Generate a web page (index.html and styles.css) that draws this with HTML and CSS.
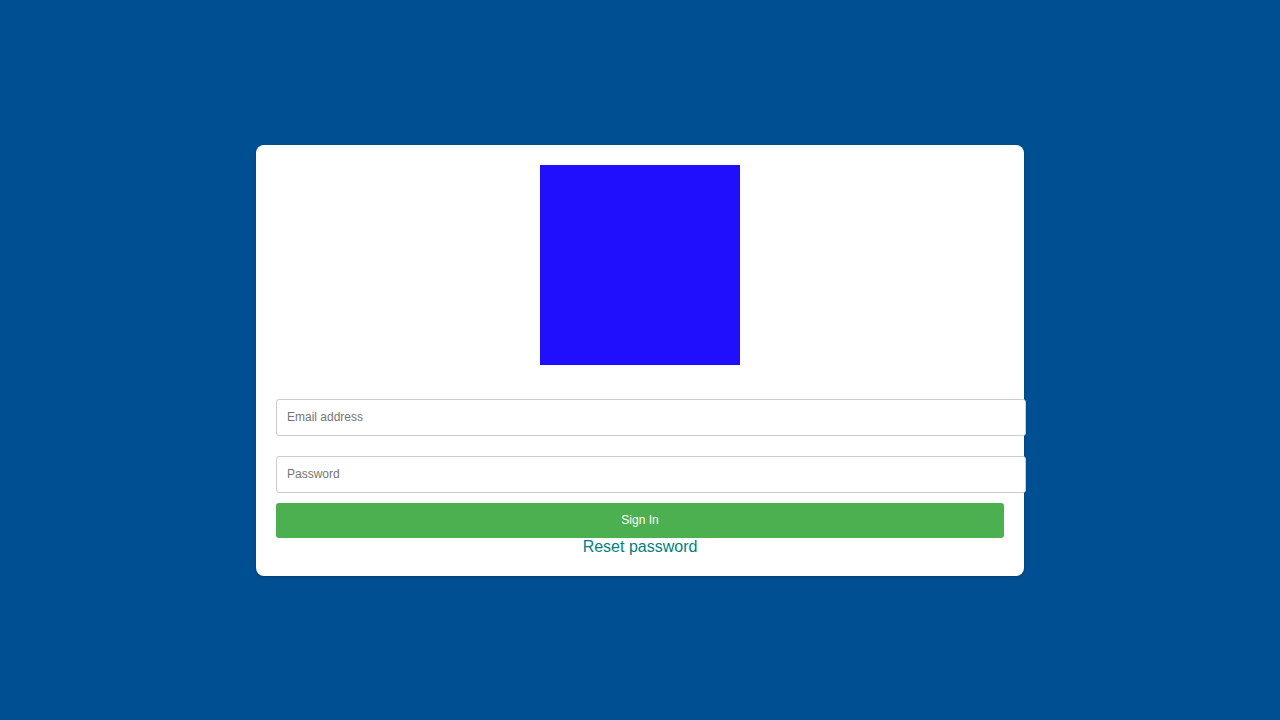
FILE: index.html
```html
<!DOCTYPE html>
<html lang="en">
<head>
<meta charset="utf-8">
<title>Sign In</title>
<link rel="stylesheet" href="styles.css">
</head>
<body>
<main class="page">
  <form class="card">
    <div class="logo"></div>
    <input class="field field-email" type="email" placeholder="Email address">
    <input class="field field-password" type="password" placeholder="Password">
    <button class="btn" type="button">Sign In</button>
    <a class="reset" href="#">Reset password</a>
  </form>
</main>
</body>
</html>
```
FILE: styles.css
```css
html, body {
  margin: 0;
  padding: 0;
  height: 100%;
}
body {
  background: #004f93;
  font-family: "Liberation Sans", Arial, sans-serif;
}
.page {
  min-height: 100vh;
  display: flex;
  align-items: center;
  justify-content: center;
}
.card {
  width: 728px;
  padding: 20px;
  background: #fff;
  border-radius: 8px;
  box-shadow: 0 1px 3px rgba(0,0,0,0.25);
  display: flex;
  flex-direction: column;
  align-items: stretch;
}
.logo {
  width: 200px;
  height: 200px;
  background: #1f0ffd;
  align-self: center;
  margin-bottom: 34px;
}
.field {
  box-sizing: content-box;
  width: 100%;
  height: 35px;
  padding: 0 10px;
  margin: 0;
  border: 1px solid #ccc;
  border-radius: 3px;
  font-family: "Liberation Sans", Arial, sans-serif;
  font-size: 12px;
  color: #333;
  background: #fff;
  outline: none;
  flex: none;
}
.field::placeholder {
  color: #757575;
}
.field-email {
  margin-bottom: 20px;
}
.field-password {
  margin-bottom: 10px;
}
.btn {
  height: 35px;
  border: none;
  border-radius: 3px;
  background: #4caf50;
  color: #fff;
  font-family: "Liberation Sans", Arial, sans-serif;
  font-size: 12px;
  padding: 0;
  cursor: pointer;
}
.reset {
  align-self: center;
  color: #007f7f;
  text-decoration: none;
  font-size: 16px;
  line-height: 18px;
}
```
